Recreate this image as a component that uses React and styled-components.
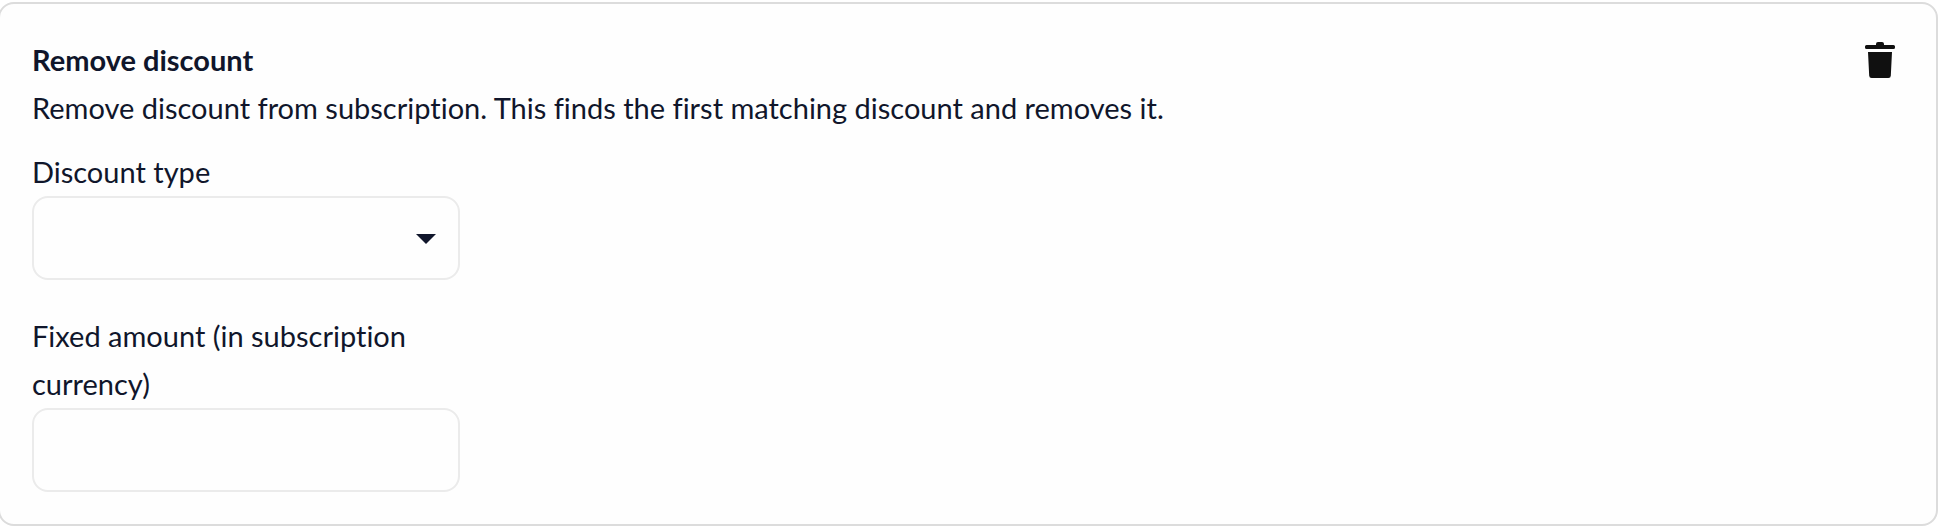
import React, { useState } from "react";
import styled, { createGlobalStyle, css } from "styled-components";

const GlobalStyle = createGlobalStyle`
  * {
    box-sizing: border-box;
  }

  body {
    margin: 0;
    background: #fff;
    color: #10162b;
    font-family: Lato, "Open Sans", sans-serif;
    font-size: 29px;
    font-weight: 400;
    font-variant-ligatures: none;
    line-height: 48px;
  }
`;

const Card = styled.section`
  display: flex;
  align-items: flex-start;
  justify-content: space-between;
  margin: 2px 6px 4px -2px;
  padding: 32px;
  border: 2px solid #dcdcdc;
  border-radius: 16px;
  background: #fefefe;
`;

const CardBody = styled.div`
  display: flex;
  flex-direction: column;
  gap: 16px;
`;

const Title = styled.h2`
  margin: 0;
  font-size: 29px;
  font-weight: 700;
`;

const Description = styled.p`
  margin: 0;
`;

const Fields = styled.div`
  display: flex;
  flex-direction: column;
  gap: 32px;
  width: 428px;
  max-width: 100%;
`;

const Field = styled.div`
  display: flex;
  flex-direction: column;
`;

const controlStyle = css`
  width: 100%;
  height: 84px;
  padding: 0 24px;
  border: 2px solid #ebebeb;
  border-radius: 16px;
  background: transparent;
  color: inherit;
  font: inherit;
  outline: none;
`;

const TextInput = styled.input`
  ${controlStyle}
`;

const Select = styled.select`
  ${controlStyle}
  appearance: none;
  cursor: pointer;
`;

const SelectWrapper = styled.div`
  position: relative;
`;

//the arrow sits over the select, clicks go through it
const Arrow = styled.svg`
  position: absolute;
  top: 18px;
  right: 10px;
  width: 48px;
  height: 48px;
  fill: #10162b;
  pointer-events: none;
`;

const IconButton = styled.button`
  display: flex;
  align-items: center;
  justify-content: center;
  flex-shrink: 0;
  width: 48px;
  height: 48px;
  padding: 0;
  border: 0;
  background: none;
  color: #101010;
  cursor: pointer;
`;

function TrashIcon() {
  return (
    <svg width="30" height="36" viewBox="0 0 30 36" fill="currentColor" aria-hidden="true">
      <path d="M13 0h4a2 2 0 0 1 2 2v1h9.500a1.500 1.500 0 0 1 1.500 1.500v1a1.500 1.500 0 0 1-1.500 1.500h-27A1.500 1.500 0 0 1 0 5.500v-1A1.500 1.500 0 0 1 1.500 3H11V2a2 2 0 0 1 2-2z" />
      <path d="M3 10h24l-1.200 23.700A2.400 2.400 0 0 1 23.400 36H6.600a2.400 2.400 0 0 1-2.400-2.300z" />
    </svg>
  );
}

export default function App() {
  const [type, setType] = useState("");
  const [amount, setAmount] = useState("");

  return (
    <>
      <GlobalStyle />
      <Card>
        <CardBody>
          <div>
            <Title>Remove discount</Title>
            <Description>
              Remove discount from subscription. This finds the first matching discount and removes it.
            </Description>
          </div>
          <Fields>
            <Field>
              <label htmlFor="discount-type">Discount type</label>
              <SelectWrapper>
                <Select id="discount-type" value={type} onChange={(e) => setType(e.target.value)}>
                  <option value=""></option>
                </Select>
                <Arrow viewBox="0 0 24 24" aria-hidden="true">
                  <path d="M7 10l5 5 5-5z" />
                </Arrow>
              </SelectWrapper>
            </Field>
            <Field>
              <label htmlFor="fixed-amount">Fixed amount (in subscription currency)</label>
              <TextInput
                id="fixed-amount"
                type="text"
                value={amount}
                onChange={(e) => setAmount(e.target.value)}
              />
            </Field>
          </Fields>
        </CardBody>
        <IconButton type="button" aria-label="Remove discount">
          <TrashIcon />
        </IconButton>
      </Card>
    </>
  );
}
